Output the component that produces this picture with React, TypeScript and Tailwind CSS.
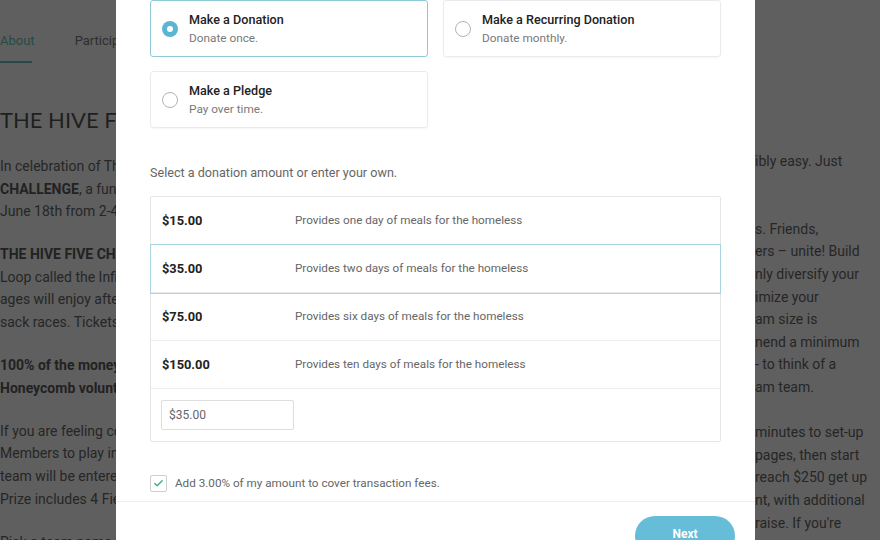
import { Check } from 'lucide-react'

type Option = { title: string; note: string; selected?: boolean }

const options: Option[] = [
  { title: 'Make a Donation', note: 'Donate once.', selected: true },
  { title: 'Make a Recurring Donation', note: 'Donate monthly.' },
  { title: 'Make a Pledge', note: 'Pay over time.' },
]

const amounts = [
  { value: '$15.00', note: 'Provides one day of meals for the homeless' },
  { value: '$35.00', note: 'Provides two days of meals for the homeless', selected: true },
  { value: '$75.00', note: 'Provides six days of meals for the homeless' },
  { value: '$150.00', note: 'Provides ten days of meals for the homeless' },
]

// page copy behind the dialog, split into what shows on each side
type Run = { text: string; bold?: boolean }

const leftParagraphs: Run[][][] = [
  [
    [{ text: 'In celebration of The Hive' }],
    [{ text: 'CHALLENGE', bold: true }, { text: ', a fun afternoon' }],
    [{ text: 'June 18th from 2-4pm' }],
  ],
  [
    [{ text: 'THE HIVE FIVE CHALLENGE', bold: true }],
    [{ text: 'Loop called the Infinity' }],
    [{ text: 'ages will enjoy after' }],
    [{ text: 'sack races. Tickets are' }],
  ],
  [
    [{ text: '100% of the money raised', bold: true }],
    [{ text: 'Honeycomb volunteers', bold: true }],
  ],
  [
    [{ text: 'If you are feeling comp' }],
    [{ text: 'Members to play in the' }],
    [{ text: 'team will be entered' }],
    [{ text: 'Prize includes 4 Field' }],
  ],
  [[{ text: 'Pick a team name' }]],
]

const rightLines = [
  'ibly easy. Just',
  '',
  '',
  's. Friends,',
  'ers \u2013 unite! Build',
  'nly diversify your',
  'imize your',
  'am size is',
  'nend a minimum',
  '- to think of a',
  'am team.',
  '',
  'minutes to set-up',
  'pages, then start',
  'reach $250 get up',
  'nt, with additional',
  "raise. If you're",
]

function Radio({ on }: { on?: boolean }) {
  if (on) {
    return (
      <span className="flex h-4 w-4 shrink-0 items-center justify-center rounded-full bg-[#5ab5d3]">
        <span className="h-[6px] w-[6px] rounded-full bg-white" />
      </span>
    )
  }
  return <span className="h-4 w-4 shrink-0 rounded-full border-[1.5px] border-[#b3b3b3]" />
}

function PageBehind() {
  return (
    <div className="flex h-[540px] w-[880px] bg-[#5f5f5f] text-[14px] text-[#262626] font-['Roboto',sans-serif]">
      <div className="w-[116px] shrink-0 overflow-hidden whitespace-nowrap">
        <div className="flex h-[63px] items-end gap-[40px] text-[13px]">
          <div className="flex flex-col">
            <span className="text-[#244b47]">About</span>
            <span className="mt-[11px] h-[2px] w-[32px] bg-[#244b47]" />
          </div>
          <span className="mb-[13px] text-[#2e2e2e]">Participants</span>
        </div>
        <div className="mt-[43px] text-[22px] leading-[28px] font-['Lato',sans-serif] text-[#1f1f1f]">
          THE HIVE FIVE CHALLENGE
        </div>
        <div className="mt-[21px] flex flex-col gap-[20.5px]">
          {leftParagraphs.map((lines, i) => (
            <div key={i} className="flex flex-col">
              {lines.map((runs, j) => (
                <span key={j} className="h-[22.6px] leading-[22.6px]">
                  {runs.map((r, k) => (
                    <span key={k} className={r.bold ? 'font-bold text-[#222]' : ''}>{r.text}</span>
                  ))}
                </span>
              ))}
            </div>
          ))}
        </div>
      </div>
      <div className="flex-1" />
      <div className="w-[125px] shrink-0 overflow-hidden whitespace-nowrap pt-[150px]">
        {rightLines.map((t, i) => (
          <div key={i} className="h-[22.6px] leading-[22.6px]">{t}</div>
        ))}
      </div>
    </div>
  )
}

function DonationDialog() {
  return (
    <div className="absolute left-[116px] top-0 flex h-[540px] w-[639px] flex-col overflow-hidden bg-white font-['Roboto',sans-serif]">
      <div className="px-[34px]">
        <div className="grid grid-cols-2 gap-x-[15px] gap-y-[14px]">
          {options.map(o => (
            <div
              key={o.title}
              className={
                o.selected
                  ? 'flex h-[57px] items-center gap-[11px] rounded-[3px] border border-[#8dcbd8] px-[11px]'
                  : 'flex h-[57px] items-center gap-[11px] rounded-[3px] border border-[#ebebeb] px-[11px] shadow-[0_1px_2px_rgba(0,0,0,0.04)]'
              }
            >
              <Radio on={o.selected} />
              <div className="flex flex-col">
                <span className="text-[12.6px] leading-[18px] font-medium text-[#222]">{o.title}</span>
                <span className="text-[11.8px] leading-[18px] text-[#7a7a7a]">{o.note}</span>
              </div>
            </div>
          ))}
        </div>

        <p className="mt-[35px] text-[12.6px] leading-[20px] text-[#666]">Select a donation amount or enter your own.</p>

        <div className="mt-[13px] rounded-[2px] border border-[#e6e6e6]">
          {amounts.map(a => (
            <div
              key={a.value}
              className={
                a.selected
                  ? 'relative flex h-[48px] items-center border-b border-[#ececec] px-[11px] outline outline-[#a6d6df]'
                  : 'flex h-[48px] items-center border-b border-[#ececec] px-[11px]'
              }
            >
              <span className="w-[133px] text-[12.8px] font-bold text-[#222]">{a.value}</span>
              <span className="text-[11.7px] text-[#666]">{a.note}</span>
            </div>
          ))}
          <div className="flex h-[52px] items-center px-[10px]">
            <input
              defaultValue="$35.00"
              className="h-[30px] w-[133px] rounded-[2px] border border-[#dedede] px-[7px] text-[12px] text-[#666] outline-none"
            />
          </div>
        </div>

        <label className="mt-[33px] flex items-center gap-[8px]">
          <span className="flex h-[17px] w-[17px] items-center justify-center rounded-[2px] border border-[#cfcfcf]">
            <Check className="h-[11px] w-[11px] text-[#3fa996]" strokeWidth={3} />
          </span>
          <span className="text-[11.7px] text-[#666]">Add 3.00% of my amount to cover transaction fees.</span>
        </label>
      </div>

      <div className="mt-[8px] border-t border-[#eeeeee]">
        <div className="flex justify-end px-[20px] pt-[14px]">
          <button className="h-[40px] w-[100px] rounded-full bg-[#66bdd7] pb-[3px] text-[12px] font-bold text-white">Next</button>
        </div>
      </div>
    </div>
  )
}

export default function App() {
  return (
    <div className="relative h-[540px] w-[880px] overflow-hidden">
      <PageBehind />
      <DonationDialog />
    </div>
  )
}
